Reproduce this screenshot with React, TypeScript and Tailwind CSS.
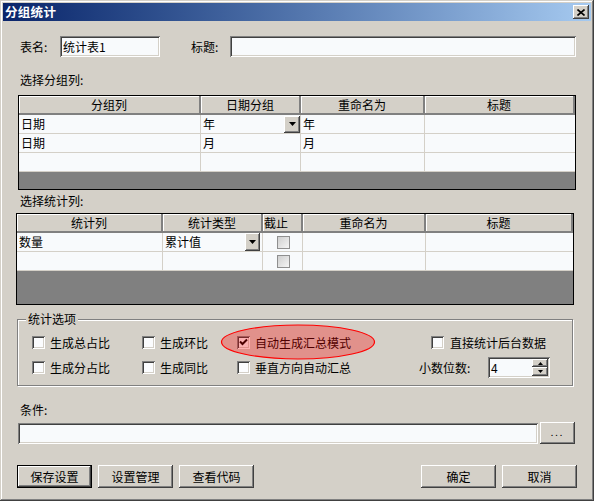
import React from "react";

const raised =
  "shadow-[inset_-1px_-1px_#404040,inset_1px_1px_#ffffff,inset_-2px_-2px_#808080,inset_2px_2px_#d4d0c8]";
const sunken =
  "shadow-[inset_1px_1px_#808080,inset_-1px_-1px_#ffffff,inset_2px_2px_#404040,inset_-2px_-2px_#d4d0c8]";

function Check({ checked = false }: { checked?: boolean }) {
  return (
    <div
      className={`w-[13px] h-[13px] shrink-0 bg-[#fbfcfe] flex items-center justify-center ${sunken}`}
    >
      {checked && (
        <svg width="9" height="9" viewBox="0 0 9 9">
          <path d="M1 3.5 L3.5 6 L8 1.5" stroke="#000" strokeWidth="2" fill="none" />
        </svg>
      )}
    </div>
  );
}

function DisabledCheck() {
  return (
    <div className="w-[13px] h-[13px] border border-[#8f8f8f] bg-gradient-to-br from-[#cfcfcf] to-[#f5f5f5]" />
  );
}

function DropBtn({ w, h }: { w: string; h: string }) {
  return (
    <div className={`${w} ${h} bg-[#d4d0c8] flex items-center justify-center shrink-0 ${raised}`}>
      <svg width="7" height="4" viewBox="0 0 7 4">
        <path d="M0 0 H7 L3.5 4 Z" fill="#000" />
      </svg>
    </div>
  );
}

function Opt({ w, label, checked = false, gap = "ml-[5px]" }: { w: string; label: string; checked?: boolean; gap?: string }) {
  return (
    <div className={`flex items-center ${w}`}>
      <Check checked={checked} />
      <span className={`${gap} leading-[14px] whitespace-nowrap`}>{label}</span>
    </div>
  );
}

function Btn({ label, def = false, w = "w-[75px]" }: { label: string; def?: boolean; w?: string }) {
  return (
    <div
      className={`${w} h-[23px] bg-[#d4d0c8] flex items-center justify-center leading-[14px] ${
        def
          ? "shadow-[inset_0_0_0_1px_#000000,inset_-2px_-2px_#404040,inset_2px_2px_#ffffff,inset_-3px_-3px_#808080]"
          : raised
      }`}
    >
      {label}
    </div>
  );
}

const hdr =
  "h-[19px] bg-[#d4d0c8] border-r-2 border-b-2 border-[#808080] shadow-[inset_1px_1px_#ffffff] flex items-center justify-center leading-[14px]";
const cell =
  "h-[19px] bg-[#f8fafc] border-r border-b border-[#d4d0c8] flex items-center pl-[2px] leading-[14px]";
const cellLast =
  "h-[19px] bg-[#f8fafc] border-b border-[#d4d0c8] flex items-center pl-[2px] leading-[14px]";

export default function App() {
  return (
    <div className="w-[594px] h-[501px] bg-[#d4d0c8] p-[3px] text-[12px] text-black font-['Noto_Sans_CJK_SC','Noto_Sans',sans-serif] shadow-[inset_-1px_-1px_#404040,inset_1px_1px_#d4d0c8,inset_-2px_-2px_#808080,inset_2px_2px_#ffffff] overflow-hidden">
      {/* Title bar */}
      <div className="h-[18px] bg-gradient-to-r from-[#0a246a] to-[#a6caf0] flex items-center justify-between pl-[2px] pr-[2px]">
        <span className="text-white font-bold text-[12.5px] leading-[14px] tracking-[0.3px]">分组统计</span>
        <div className={`w-[16px] h-[14px] bg-[#d4d0c8] flex items-center justify-center ${raised}`}>
          <svg width="8" height="7" viewBox="0 0 8 7">
            <path d="M0.5 0.5 L7.5 6.5 M7.5 0.5 L0.5 6.5" stroke="#000" strokeWidth="1.6" />
          </svg>
        </div>
      </div>

      {/* Row 1 */}
      <div className="mt-[15px] h-[21px] flex items-center">
        <span className="ml-[17px] w-[40px] leading-[14px]">表名:</span>
        <div className={`w-[100px] h-[21px] bg-[#f8fafc] flex items-center pl-[3px] leading-[14px] ${sunken}`}>统计表1</div>
        <span className="ml-[31px] w-[39px] leading-[14px]">标题:</span>
        <div className={`w-[346px] h-[21px] bg-[#f8fafc] ${sunken}`} />
      </div>

      <div className="mt-[15px] h-[16px] ml-[17px] flex items-center leading-[14px]">选择分组列:</div>

      {/* Table 1 */}
      <div className="mt-[7px] ml-[15px] w-[558px] h-[95px] border border-black flex flex-col">
        <div className="grid grid-cols-[182px_100px_124px_150px]">
          <div className={hdr}>分组列</div>
          <div className={hdr}>日期分组</div>
          <div className={hdr}>重命名为</div>
          <div className={`${hdr} border-r-0`}>标题</div>

          <div className={cell}>日期</div>
          <div className={`${cell} justify-between pr-0`}>
            <span>年</span>
            <DropBtn w="w-[16px]" h="h-[17px]" />
          </div>
          <div className={cell}>年</div>
          <div className={cellLast} />

          <div className={cell}>日期</div>
          <div className={cell}>月</div>
          <div className={cell}>月</div>
          <div className={cellLast} />

          <div className={cell} />
          <div className={cell} />
          <div className={cell} />
          <div className={cellLast} />
        </div>
        <div className="flex-1 bg-[#808080]" />
      </div>

      <div className="mt-[3px] h-[16px] ml-[17px] flex items-center leading-[14px]">选择统计列:</div>

      {/* Table 2 */}
      <div className="mt-[4px] ml-[13px] w-[558px] h-[92px] border border-black flex flex-col">
        <div className="grid grid-cols-[146px_100px_40px_123px_147px]">
          <div className={hdr}>统计列</div>
          <div className={hdr}>统计类型</div>
          <div className={`${hdr} justify-start pl-[1px]`}>截止</div>
          <div className={hdr}>重命名为</div>
          <div className={`${hdr} border-r-0`}>标题</div>

          <div className={cell}>数量</div>
          <div className={`${cell} justify-between pr-[2px]`}>
            <span>累计值</span>
            <DropBtn w="w-[15px]" h="h-[18px]" />
          </div>
          <div className={`${cell} justify-center pl-0`}>
            <DisabledCheck />
          </div>
          <div className={cell} />
          <div className={cellLast} />

          <div className={cell} />
          <div className={cell} />
          <div className={`${cell} justify-center pl-0`}>
            <DisabledCheck />
          </div>
          <div className={cell} />
          <div className={cellLast} />
        </div>
        <div className="flex-1 bg-[#808080]" />
      </div>

      {/* Group box */}
      <div className="relative mt-[14px] ml-[14px] w-[556px] h-[67px] border border-[#808080] shadow-[inset_1px_1px_#ffffff,1px_1px_#ffffff] pt-[12px]">
        <span className="absolute left-[8px] top-[-8px] px-[2px] bg-[#d4d0c8] leading-[14px]">统计选项</span>
        <div className="flex h-[21px] items-center pl-[14px]">
          <Opt w="w-[110px]" label="生成总占比" />
          <Opt w="w-[95px]" label="生成环比" />
          <Opt w="w-[194px]" label="自动生成汇总模式" checked />
          <Opt w="w-[130px]" label="直接统计后台数据" gap="ml-[6px]" />
        </div>
        <div className="flex h-[21px] items-center pl-[14px] mt-[4px]">
          <Opt w="w-[110px]" label="生成分占比" />
          <Opt w="w-[95px]" label="生成同比" />
          <Opt w="w-[182px]" label="垂直方向自动汇总" />
          <span className="w-[69px] leading-[14px]">小数位数:</span>
          <div className={`w-[62px] h-[21px] bg-[#f8fafc] flex items-center justify-between pl-[3px] pr-[2px] ${sunken}`}>
            <span className="leading-[14px]">4</span>
            <div className="flex flex-col">
              <div className={`w-[16px] h-[8px] bg-[#d4d0c8] flex items-center justify-center ${raised}`}>
                <svg width="5" height="3" viewBox="0 0 5 3">
                  <path d="M0 3 H5 L2.5 0 Z" fill="#000" />
                </svg>
              </div>
              <div className={`w-[16px] h-[9px] bg-[#d4d0c8] flex items-center justify-center ${raised}`}>
                <svg width="5" height="3" viewBox="0 0 5 3">
                  <path d="M0 0 H5 L2.5 3 Z" fill="#000" />
                </svg>
              </div>
            </div>
          </div>
        </div>
        {/* red highlight ellipse */}
        <svg
          className="absolute left-[202px] top-[4px] pointer-events-none"
          width="156"
          height="36"
          viewBox="0 0 156 36"
        >
          <ellipse cx="78" cy="18" rx="76.5" ry="17" fill="rgba(255,0,0,0.3)" stroke="#ff0000" strokeWidth="1.2" />
        </svg>
      </div>

      <div className="mt-[16px] h-[16px] ml-[17px] flex items-center leading-[14px]">条件:</div>

      <div className="mt-[4px] ml-[15px] h-[22px] flex items-center">
        <div className={`w-[520px] h-[21px] bg-[#f8fafc] ${sunken}`} />
        <div className={`ml-[2px] w-[35px] h-[22px] bg-[#d4d0c8] flex items-center justify-center text-[9px] tracking-[2px] leading-[10px] ${raised}`}>
          ...
        </div>
      </div>

      {/* Buttons */}
      <div className="mt-[21px] flex justify-between">
        <div className="ml-[14px] flex gap-[6px]">
          <Btn label="保存设置" def />
          <Btn label="设置管理" />
          <Btn label="查看代码" />
        </div>
        <div className="mr-[14px] flex gap-[6px]">
          <Btn label="确定" />
          <Btn label="取消" />
        </div>
      </div>
    </div>
  );
}
